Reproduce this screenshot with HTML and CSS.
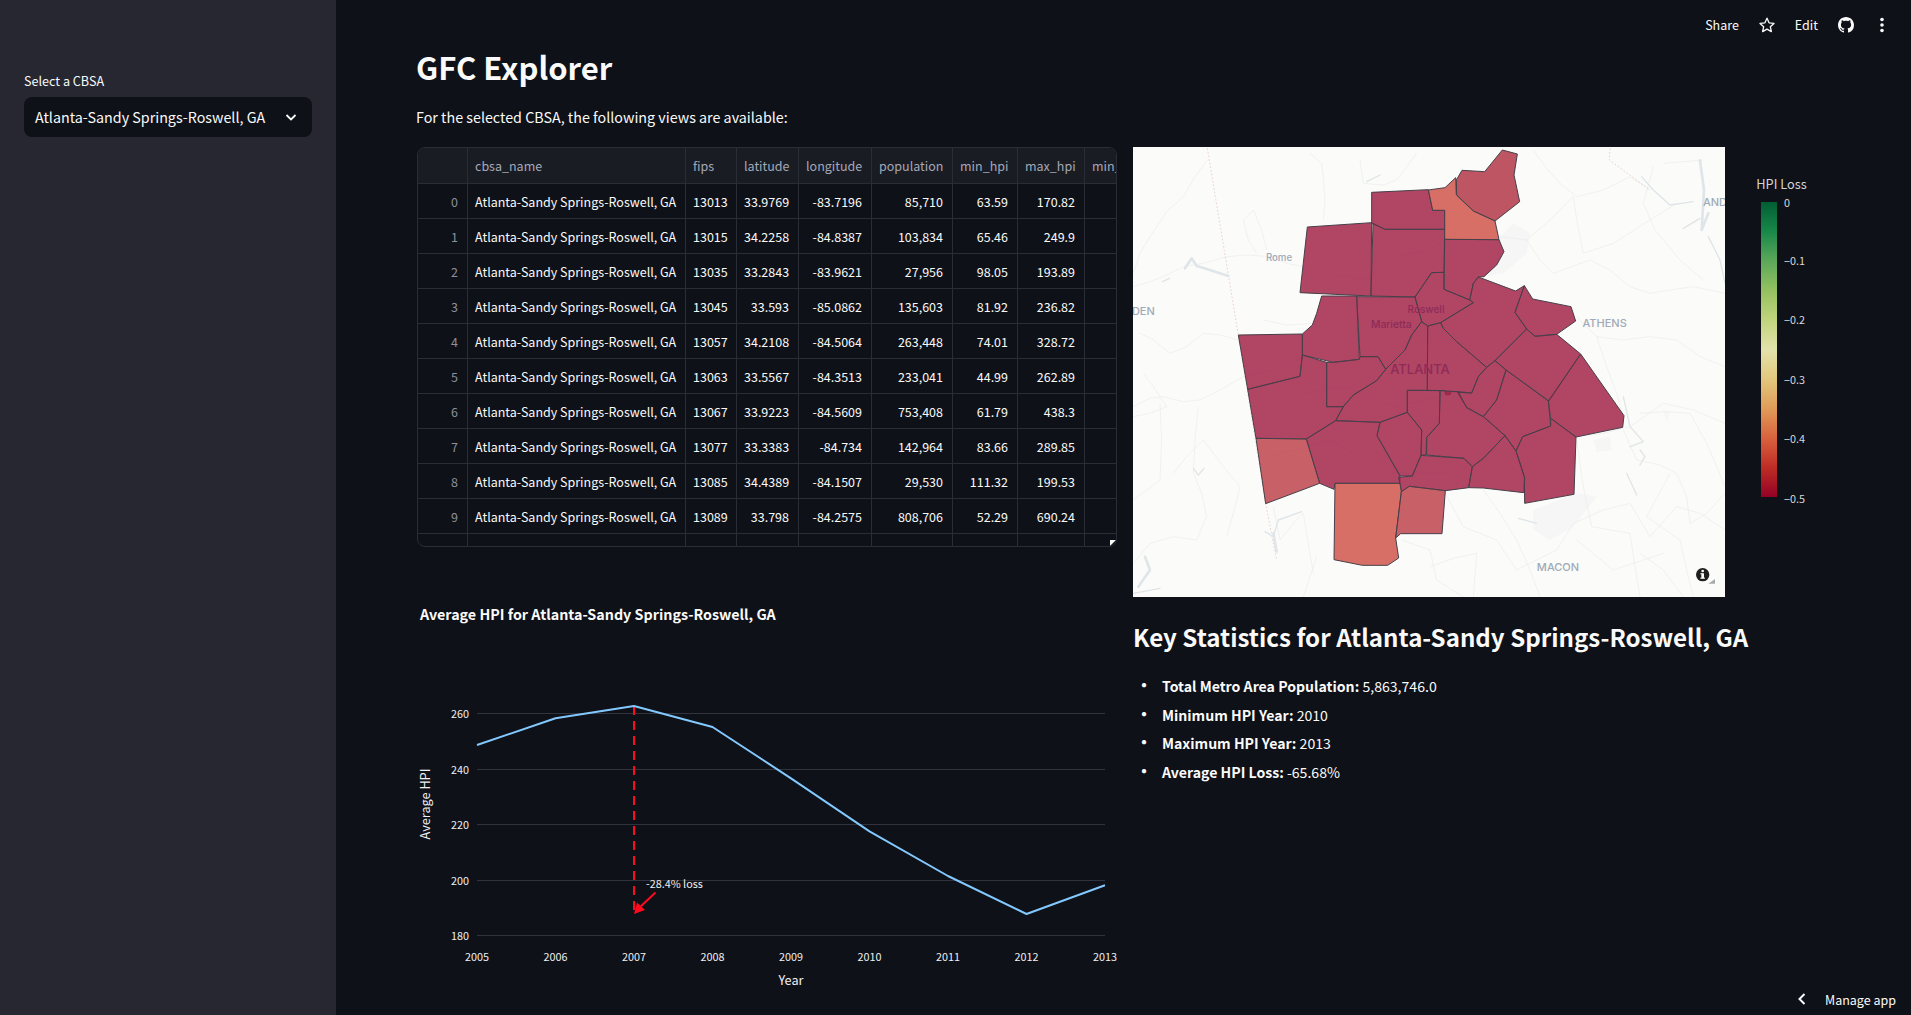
FILE: index.html
```html
<!DOCTYPE html>
<html lang="en">
<head>
<meta charset="utf-8">
<title>GFC Explorer</title>
<link rel="stylesheet" href="styles.css">
</head>
<body>
<div class="app">
  <aside class="sidebar">
    <label class="select-label">Select a CBSA</label>
    <div class="select">
      <span>Atlanta-Sandy Springs-Roswell, GA</span>
      <svg class="chevron" viewBox="0 0 16 16"><path d="M3.5 6l4.5 4.5L12.500 6"/></svg>
    </div>
  </aside>

  <main class="main">
    <h1 class="title">GFC Explorer</h1>
    <p class="intro">For the selected CBSA, the following views are available:</p>

    <div class="columns">
      <section class="col-left">
        <div class="grid-wrap">
          <table class="grid">
            <colgroup>
              <col class="c-idx"><col class="c-name"><col class="c-fips"><col class="c-lat"><col class="c-lon"><col class="c-pop"><col class="c-min"><col class="c-max"><col class="c-year">
            </colgroup>
            <thead>
              <tr><th></th><th>cbsa_name</th><th>fips</th><th>latitude</th><th>longitude</th><th>population</th><th>min_hpi</th><th>max_hpi</th><th>min_hpi_year</th></tr>
            </thead>
            <tbody>
              <tr><td class="idx">0</td><td>Atlanta-Sandy Springs-Roswell, GA</td><td>13013</td><td class="num">33.9769</td><td class="num">-83.7196</td><td class="num">85,710</td><td class="num">63.59</td><td class="num">170.82</td><td class="num">2012</td></tr>
              <tr><td class="idx">1</td><td>Atlanta-Sandy Springs-Roswell, GA</td><td>13015</td><td class="num">34.2258</td><td class="num">-84.8387</td><td class="num">103,834</td><td class="num">65.46</td><td class="num">249.9</td><td class="num">2011</td></tr>
              <tr><td class="idx">2</td><td>Atlanta-Sandy Springs-Roswell, GA</td><td>13035</td><td class="num">33.2843</td><td class="num">-83.9621</td><td class="num">27,956</td><td class="num">98.05</td><td class="num">193.89</td><td class="num">2012</td></tr>
              <tr><td class="idx">3</td><td>Atlanta-Sandy Springs-Roswell, GA</td><td>13045</td><td class="num">33.593</td><td class="num">-85.0862</td><td class="num">135,603</td><td class="num">81.92</td><td class="num">236.82</td><td class="num">2012</td></tr>
              <tr><td class="idx">4</td><td>Atlanta-Sandy Springs-Roswell, GA</td><td>13057</td><td class="num">34.2108</td><td class="num">-84.5064</td><td class="num">263,448</td><td class="num">74.01</td><td class="num">328.72</td><td class="num">2011</td></tr>
              <tr><td class="idx">5</td><td>Atlanta-Sandy Springs-Roswell, GA</td><td>13063</td><td class="num">33.5567</td><td class="num">-84.3513</td><td class="num">233,041</td><td class="num">44.99</td><td class="num">262.89</td><td class="num">2012</td></tr>
              <tr><td class="idx">6</td><td>Atlanta-Sandy Springs-Roswell, GA</td><td>13067</td><td class="num">33.9223</td><td class="num">-84.5609</td><td class="num">753,408</td><td class="num">61.79</td><td class="num">438.3</td><td class="num">2012</td></tr>
              <tr><td class="idx">7</td><td>Atlanta-Sandy Springs-Roswell, GA</td><td>13077</td><td class="num">33.3383</td><td class="num">-84.734</td><td class="num">142,964</td><td class="num">83.66</td><td class="num">289.85</td><td class="num">2012</td></tr>
              <tr><td class="idx">8</td><td>Atlanta-Sandy Springs-Roswell, GA</td><td>13085</td><td class="num">34.4389</td><td class="num">-84.1507</td><td class="num">29,530</td><td class="num">111.32</td><td class="num">199.53</td><td class="num">2011</td></tr>
              <tr><td class="idx">9</td><td>Atlanta-Sandy Springs-Roswell, GA</td><td>13089</td><td class="num">33.798</td><td class="num">-84.2575</td><td class="num">808,706</td><td class="num">52.29</td><td class="num">690.24</td><td class="num">2012</td></tr>
              <tr><td class="idx"></td><td></td><td></td><td></td><td></td><td></td><td></td><td></td><td></td></tr>
            </tbody>
          </table>
          <span class="grid-handle"></span>
        </div>

        <svg class="line-chart" viewBox="0 0 700 420">
          <text class="chart-title" x="3" y="23">Average HPI for Atlanta-Sandy Springs-Roswell, GA</text>
          <g class="gridlines">
            <line x1="60" x2="688" y1="123.500" y2="123.500"/>
            <line x1="60" x2="688" y1="179.500" y2="179.500"/>
            <line x1="60" x2="688" y1="234.500" y2="234.500"/>
            <line x1="60" x2="688" y1="290.500" y2="290.500"/>
            <line x1="60" x2="688" y1="345.500" y2="345.500"/>
          </g>
          <g class="ytick">
            <text x="52" y="123">260</text>
            <text x="52" y="179">240</text>
            <text x="52" y="234">220</text>
            <text x="52" y="290">200</text>
            <text x="52" y="345">180</text>
          </g>
          <g class="xtick">
            <text x="60" y="366">2005</text>
            <text x="138.500" y="366">2006</text>
            <text x="217" y="366">2007</text>
            <text x="295.500" y="366">2008</text>
            <text x="374" y="366">2009</text>
            <text x="452.500" y="366">2010</text>
            <text x="531" y="366">2011</text>
            <text x="609.500" y="366">2012</text>
            <text x="688" y="366">2013</text>
          </g>
          <text class="axis-title" x="374" y="389">Year</text>
          <text class="axis-title axis-y" transform="translate(7 214) rotate(-90)">Average HPI</text>
          <line class="drop" x1="217" y1="116" x2="217" y2="324"/>
          <polyline class="hpi" points="60,155 138.500,128.300 217,116 295.500,137 374,188.300 452.500,241.300 531,286 609.500,324 688,295.300"/>
          <line class="arrow-shaft" x1="238.500" y1="302.500" x2="222" y2="318"/>
          <polygon class="arrow-head" points="217,324 220,312.500 228,320"/>
          <text class="note" x="229" y="293">-28.4% loss</text>
        </svg>
      </section>

      <section class="col-right">
        <div class="map-row">
          <svg class="map" viewBox="9 21 1776 1350">
            <rect class="map-bg" x="9" y="21" width="1776" height="1350"/>
            <g class="patches">
              <polygon points="1110,290 1150,250 1200,280 1190,340 1120,400 1060,410 1100,360"/>
              <polygon points="1390,900 1440,890 1445,930 1400,935"/>
              <polygon points="1210,1110 1340,1060 1400,1070 1330,1160 1260,1200 1210,1170"/>
              <polygon points="1600,810 1620,815 1610,845"/>
            </g>
            <g class="roads">
              <polyline points="232,60 195,110 160,170 110,215 60,290 30,340 10,400"/>
              <polyline points="10,800 60,775 100,770 160,785 210,780 280,745 340,710 430,690 520,650"/>
              <polyline points="10,440 60,425 100,410 160,380 220,370 290,350 350,345 420,350 470,370 520,380"/>
              <polyline points="410,330 395,270 370,210 340,240 355,300 380,340"/>
              <polyline points="540,40 575,70 580,110 585,180 580,240"/>
              <polyline points="690,60 700,130 760,135 800,120 830,80 860,40"/>
              <polyline points="1210,30 1250,85 1290,130 1340,170 1420,150 1500,110 1560,150"/>
              <polyline points="1110,290 1190,300 1260,240 1330,170 1340,240 1360,340 1450,310 1560,240 1640,190"/>
              <polyline points="1190,300 1230,360 1270,400 1380,360 1440,390 1500,440 1560,460 1620,450 1690,440 1785,460"/>
              <polyline points="1340,530 1400,590 1480,600 1560,590 1640,600 1710,650 1785,680"/>
              <polyline points="1400,590 1430,680 1460,760 1480,830"/>
              <polyline points="1340,890 1420,880 1500,860 1600,790 1690,810 1785,850"/>
              <polyline points="1480,870 1520,960 1590,975 1640,1000 1670,1070 1680,1150 1730,1120 1785,1060"/>
              <polyline points="1530,820 1610,815 1680,820 1730,910 1760,980 1785,1040"/>
              <polyline points="30,580 70,600 120,640 170,620 220,580 270,585 325,600"/>
              <polyline points="400,540 470,555 560,550"/>
              <polyline points="10,1080 50,1050 90,1020 95,900 90,790"/>
              <polyline points="40,700 70,740 110,800 60,820 10,830"/>
              <polyline points="205,800 195,900 190,1000 215,1060 230,1130 200,1200 130,1190 60,1210 10,1270"/>
              <polyline points="430,1100 450,1200 490,1150 520,1120 535,1210 550,1300"/>
              <polyline points="815,1200 900,1230 920,1320 1000,1371"/>
              <polyline points="946,1060 1000,1160 1100,1200 1160,1290 1280,1230 1330,1150 1420,1110 1500,1090 1560,1190 1640,1100 1710,1120 1785,1170"/>
              <polyline points="1060,1050 1110,1120 1160,1200 1200,1290 1230,1371"/>
              <polyline points="900,1280 970,1255 1040,1240 1030,1371"/>
              <polyline points="1340,900 1360,1040 1385,1160 1500,1180 1515,1280 1530,1371"/>
              <polyline points="130,1000 170,950 220,900 280,980 330,1040 310,1120 290,1190"/>
              <polyline points="560,1250 540,1310 520,1371"/>
              <polyline points="1620,1000 1550,1130 1650,1200 1670,1290 1690,1371"/>
              <polyline points="1530,1240 1600,1290 1660,1371"/>
              <polyline points="600,400 700,420 800,350 900,330 1000,260"/>
              <polyline points="520,760 640,740 800,800 960,760 1100,860 1250,900"/>
              <polyline points="420,950 600,900 780,1000 950,1000"/>
              <polyline points="1570,80 1540,190 1575,270 1650,360 1720,420"/>
              <polyline points="1600,70 1720,60"/>
              <polyline points="1340,1200 1450,1290 1600,1240"/>
            </g>
            <polyline class="state" points="232,25 325,585 407,1091 440,1260"/>
            <polyline class="state" points="1440,25 1438,60 1560,150"/>
            <g class="lakes">
              <polyline class="thick" points="165,385 185,355 200,378 240,390 295,408"/>
              <polyline points="98,425 118,415"/>
              <polyline points="710,125 730,115 750,105"/>
              <polyline points="405,1175 430,1190 445,1140 515,1115"/>
              <polyline class="thick" points="440,1235 430,1180"/>
              <polyline class="thick" points="25,1340 60,1290 45,1250"/>
              <polyline points="10,1360 90,1345"/>
              <polyline points="190,985 205,1005 222,985"/>
              <polyline points="1480,770 1500,860 1540,905 1500,920"/>
              <polyline points="1490,1000 1520,1065"/>
              <polyline points="1535,110 1570,150 1620,195 1690,185"/>
              <polyline class="thick" points="1710,61 1722,150 1715,270 1735,220"/>
              <polyline points="1660,265 1710,235"/>
              <polyline points="1735,290 1770,360 1785,430"/>
              <polyline points="1530,930 1545,950 1530,975"/>
              <polyline points="1165,1135 1220,1150"/>
            </g>
            <g class="labels">
              <text class="l-city" x="447" y="351">Rome</text>
              <text class="l-big" x="40" y="514">DEN</text>
              <text class="l-big" x="1424" y="549">ATHENS</text>
              <text class="l-big" x="1284" y="1281">MACON</text>
              <text class="l-big" x="1755" y="187">AND</text>
            </g>
            <g class="counties">
              <polygon class="dark" points="532,261 725,248 723,468 510,458"/>
              <polygon class="dark" points="725,157 895,149 908,211 944,211 944,268 765,268 725,250"/>
              <polygon class="dark" points="729,250 765,268 944,268 942,397 905,398 855,471 723,468"/>
              <polygon class="dark" points="944,298 1107,299 1122,335 1100,375 1062,410 1045,411 1030,430 1019,480 942,448"/>
              <polygon class="dark" points="905,398 942,397 942,448 1019,480 1030,488 932,548 893,558 875,545 855,471"/>
              <polygon class="dark" points="680,470 855,471 875,545 845,585 825,630 767,688 744,650 690,650"/>
              <polygon class="dark" points="575,468 680,468 688,658 610,667 517,645 517,582 547,555 560,520"/>
              <polygon class="dark" points="325,585 517,582 517,645 510,709 353,748"/>
              <polygon class="dark" points="353,748 510,709 517,645 590,667 590,800 640,800 617,842 529,897 378,895"/>
              <polygon class="dark" points="590,667 610,667 688,658 690,650 744,650 767,688 740,722 670,765 640,800 590,800"/>
              <polygon class="dark" points="893,558 875,545 845,585 825,630 767,688 740,722 670,765 640,800 617,842 750,847 832,817 832,751 892,751"/>
              <polygon class="dark" points="893,558 932,548 940,565 980,605 1070,682 1045,710 1025,759 985,755 962,755 960,764 947,764 945,752 892,751"/>
              <polygon class="dark" points="932,548 1030,488 1019,480 1030,430 1045,411 1157,453 1183,437 1155,517 1190,567 1095,662 1070,682 980,605 940,565"/>
              <polygon class="dark" points="1183,437 1208,477 1323,500 1337,543 1280,583 1215,589 1190,567 1155,517"/>
              <polygon class="dark" points="1190,567 1215,589 1280,583 1352,642 1257,783 1128,690 1095,662"/>
              <polygon class="dark" points="1352,642 1482,827 1478,862 1338,891 1262,835 1255,783"/>
              <polygon class="dark" points="1095,662 1128,690 1100,780 1060,830 1010,803 982,757 1025,759 1045,710 1070,682"/>
              <polygon class="dark" points="1128,690 1255,783 1262,858 1178,890 1158,933 1125,887 1060,830 1100,780"/>
              <polygon class="dark" points="1262,835 1338,891 1332,1063 1184,1090 1183,1012 1158,933 1178,890 1262,858"/>
              <polygon class="dark" points="930,752 985,755 1010,803 1060,830 1125,887 1060,955 1027,980 1002,955 890,945 890,892 928,850"/>
              <polygon class="dark" points="832,751 930,752 928,850 890,892 888,945 873,946 875,870 832,817"/>
              <polygon class="dark" points="832,817 875,870 873,946 847,1008 810,1008 741,887 750,847"/>
              <polygon class="dark" points="617,842 750,847 741,887 810,1008 810,1030 615,1030 612,1048 569,1030 529,897"/>
              <polygon class="dark" points="873,946 1002,955 1027,980 1016,1043 946,1052 838,1039 814,1055 806,1012 847,1008"/>
              <polygon class="dark" points="1125,887 1158,933 1184,1012 1181,1058 1060,1044 1016,1043 1027,980 1060,955"/>
              <polygon class="mid" points="1117,30 1162,42 1152,105 1169,185 1095,243 1030,213 980,165 979,120 996,91 1064,95"/>
              <polygon class="light" points="895,150 945,143 977,113 979,165 1030,213 1095,243 1107,299 944,298 944,211 908,211"/>
              <polygon class="mid2" points="378,895 529,897 569,1030 407,1091"/>
              <polygon class="light" points="615,1030 810,1030 814,1055 797,1194 806,1254 773,1276 697,1276 612,1259"/>
              <polygon class="mid2" points="838,1039 946,1052 936,1181 812,1181 797,1194 814,1055"/>
            </g>
            <g class="labels-over">
              <text class="l-ros" x="888" y="506">Roswell</text>
              <text class="l-mar" x="784" y="552">Marietta</text>
              <text class="l-atl" x="870" y="686">ATLANTA</text>
            </g>
            <g class="info">
              <polygon class="info-mark" points="1735,1331 1755,1317 1755,1331"/>
              <circle class="info-halo" cx="1718" cy="1304" r="26"/>
              <circle class="info-dot" cx="1718" cy="1304" r="20"/>
              <circle class="info-i" cx="1718" cy="1293" r="4"/>
              <rect class="info-i" x="1714" y="1300" width="8" height="15"/>
              <rect class="info-i" x="1711" y="1300" width="7" height="3"/>
              <rect class="info-i" x="1711" y="1313" width="14" height="3"/>
            </g>
          </svg>

          <svg class="legend" viewBox="0 0 108 450">
            <defs>
              <linearGradient id="rdylgn" x1="0" y1="0" x2="0" y2="1">
                <stop offset="0" stop-color="#006837"/>
                <stop offset="0.1" stop-color="#1a9850"/>
                <stop offset="0.2" stop-color="#66bd63"/>
                <stop offset="0.3" stop-color="#a6d96a"/>
                <stop offset="0.4" stop-color="#d9ef8b"/>
                <stop offset="0.5" stop-color="#ffffbf"/>
                <stop offset="0.6" stop-color="#fee08b"/>
                <stop offset="0.7" stop-color="#fdae61"/>
                <stop offset="0.8" stop-color="#f46d43"/>
                <stop offset="0.9" stop-color="#d73027"/>
                <stop offset="1" stop-color="#a50026"/>
              </linearGradient>
            </defs>
            <text class="legend-title" x="56.500" y="36.500">HPI Loss</text>
            <rect class="legend-bar" x="36" y="55" width="16" height="295"/>
            <g class="legend-tick">
              <text x="59" y="54.500">0</text>
              <text x="59" y="113">−0.1</text>
              <text x="59" y="172">−0.2</text>
              <text x="59" y="232">−0.3</text>
              <text x="59" y="291">−0.4</text>
              <text x="59" y="350.500">−0.5</text>
            </g>
          </svg>
        </div>

        <h2 class="stats-title">Key Statistics for Atlanta-Sandy Springs-Roswell, GA</h2>
        <ul class="stats">
          <li><strong>Total Metro Area Population:</strong> 5,863,746.0</li>
          <li><strong>Minimum HPI Year:</strong> 2010</li>
          <li><strong>Maximum HPI Year:</strong> 2013</li>
          <li><strong>Average HPI Loss:</strong> -65.68%</li>
        </ul>
      </section>
    </div>
  </main>

  <header class="toolbar">
    <span>Share</span>
    <svg class="tool-icon star" viewBox="0 0 24 24"><path d="M12 1.800l3.100 6.900 7.400.9-5.500 5 1.500 7.300-6.500-3.700-6.500 3.700 1.500-7.300-5.500-5 7.400-.9z"/></svg>
    <span>Edit</span>
    <svg class="tool-icon gh" viewBox="0 0 16 16"><path d="M8 0C3.580 0 0 3.580 0 8c0 3.540 2.290 6.530 5.470 7.590.4.070.55-.17.55-.38 0-.19-.01-.82-.01-1.490-2.010.37-2.530-.49-2.690-.94-.09-.23-.48-.94-.82-1.130-.28-.15-.68-.52-.01-.53.63-.01 1.080.58 1.230.82.72 1.210 1.870.87 2.330.66.07-.52.28-.87.51-1.070-1.780-.2-3.640-.89-3.640-3.950 0-.87.31-1.590.82-2.150-.08-.2-.36-1.020.08-2.120 0 0 .67-.21 2.200.82.64-.18 1.320-.27 2-.27.68 0 1.360.09 2 .27 1.530-1.040 2.200-.82 2.200-.82.44 1.100.16 1.920.08 2.120.51.56.82 1.270.82 2.150 0 3.070-1.870 3.750-3.650 3.950.29.25.54.73.54 1.480 0 1.070-.01 1.930-.01 2.200 0 .21.15.46.55.38A8.013 8.013 0 0016 8c0-4.420-3.580-8-8-8z"/></svg>
    <svg class="tool-icon dots" viewBox="0 0 16 16"><circle cx="8" cy="2.500" r="1.800"/><circle cx="8" cy="8" r="1.800"/><circle cx="8" cy="13.500" r="1.800"/></svg>
  </header>

  <div class="manage">
    <svg class="manage-chevron" viewBox="0 0 16 16"><path d="M10.500 3L5.500 8l5 5"/></svg>
    <span>Manage app</span>
  </div>
</div>
</body>
</html>
```

FILE: styles.css
```css
* { box-sizing: border-box; }
html, body { margin: 0; height: 100%; overflow: hidden; background: #0e1117; }
body {
  font-family: "Noto Sans CJK SC", "Noto Sans", "Liberation Sans", sans-serif;
  color: #fafafa;
  font-size: 14.300px;
}
.app { position: relative; display: flex; height: 1015px; width: 1911px; }

/* sidebar */
.sidebar { width: 336px; flex: none; background: #262730; padding: 69px 24px 0; }
.select-label { display: block; font-size: 12.600px; line-height: 24px; height: 28px; }
.select {
  display: flex; align-items: center; justify-content: space-between;
  height: 40px; padding: 0 13px 0 11px; background: #0e1117; border-radius: 8px;
  font-size: 14.300px; line-height: 24px; white-space: nowrap;
}
.chevron { width: 16px; height: 16px; fill: none; stroke: #fafafa; stroke-width: 1.800; }

/* main */
.main { flex: 1; padding: 43px 0 0 81px; }
.title { margin: 0 0 0 -1px; font-size: 31px; font-weight: 700; line-height: 48px; }
.intro { margin: 14px 0 18px -1px; font-size: 14.300px; line-height: 24px; }
.columns { display: flex; gap: 16px; }
.col-left { width: 700px; flex: none; }
.col-right { flex: 1; }

/* data grid */
.grid-wrap {
  position: relative; width: 700px; height: 400px; overflow: hidden;
  border: 1px solid #2b2d36; border-radius: 8px;
}
.grid { border-collapse: separate; border-spacing: 0; table-layout: fixed; width: 736px; font-size: 12.500px; }
.c-idx { width: 50px; } .c-name { width: 218px; } .c-fips { width: 51px; } .c-lat { width: 62px; }
.c-lon { width: 73px; } .c-pop { width: 81px; } .c-min { width: 65px; } .c-max { width: 67px; } .c-year { width: 69px; }
.grid th, .grid td {
  padding: 0 9px 0 7px; white-space: nowrap; overflow: hidden;
  border-right: 1px solid #2b2d36; border-bottom: 1px solid #2b2d36;
}
.grid th { height: 36px; background: #1a1c24; color: #a3a8b8; font-weight: 400; text-align: left; }
.grid td { height: 35px; }
.grid .num { text-align: right; }
.grid .idx { text-align: right; color: #8d8f9a; }
.grid-handle {
  position: absolute; right: 0; bottom: 0; width: 6px; height: 6px;
  background: #fafafa; clip-path: polygon(0 0, 100% 0, 0 100%);
}

/* line chart */
.line-chart { display: block; width: 700px; height: 420px; margin-top: 43px; }
.line-chart text { fill: #f0f0f2; font-size: 10.800px; dominant-baseline: central; }
.line-chart .chart-title { font-size: 14.300px; font-weight: 700; fill: #fafafa; }
.gridlines line { stroke: #31333f; stroke-width: 1; }
.ytick text { text-anchor: end; }
.xtick text { text-anchor: middle; }
.line-chart .axis-title { font-size: 12.700px; text-anchor: middle; }
.hpi { fill: none; stroke: #83c9ff; stroke-width: 2; stroke-linejoin: round; }
.drop { stroke: #ff0a1e; stroke-width: 2; stroke-dasharray: 9 6; }
.arrow-shaft { stroke: #ff0a1e; stroke-width: 2; }
.arrow-head { fill: #ff0a1e; }

/* map */
.map-row { display: flex; height: 450px; }
.map { width: 592px; height: 450px; flex: none; display: block; }
.legend { width: 108px; height: 450px; flex: none; display: block; }
.map-bg { fill: #fbfbf9; }
.patches polygon { fill: #f5f6f5; }
.roads polyline { fill: none; stroke: #eaecec; stroke-width: 2; stroke-linejoin: round; }
.state { fill: none; stroke: #e6c9cc; stroke-width: 2.500; stroke-dasharray: 5 6; }
.lakes polyline { fill: none; stroke: #dfe5e8; stroke-width: 4; stroke-linejoin: round; stroke-linecap: round; }
.lakes .thick { stroke-width: 8; }
.labels text, .labels-over text { text-anchor: middle; dominant-baseline: central; font-family: "Inter", sans-serif; font-weight: 500; }
.labels text { fill: #a0aab8; }
.l-city { font-size: 29px; }
.l-big { font-size: 33px; }
.labels-over text { fill: #8e2c58; }
.labels-over .l-ros { font-size: 30px; }
.labels-over .l-mar { font-size: 31px; }
.labels-over .l-atl { font-size: 39px; }
.counties polygon { stroke: #46404a; stroke-width: 3; stroke-linejoin: round; }
.counties .dark { fill: #a2244a; fill-opacity: .85; }
.counties .mid { fill: #b23748; fill-opacity: .85; }
.counties .mid2 { fill: #bd444d; fill-opacity: .85; }
.counties .light { fill: #d0564c; fill-opacity: .85; }
.info-mark { fill: #a8aaaa; }
.info-halo { fill: #fbfbf9; }
.info-dot { fill: #1f1f1f; }
.info-i { fill: #fff; }

/* legend */
.legend text { dominant-baseline: central; }
.legend-title { fill: #d2d3d6; font-size: 12.800px; text-anchor: middle; }
.legend-bar { fill: url(#rdylgn); opacity: .88; }
.legend-tick text { fill: #d8d9dc; font-size: 10.800px; }

/* stats */
.stats-title { margin: 20px 0 0; font-size: 24.100px; font-weight: 700; line-height: 40px; }
.stats { margin: 17px 0 0; padding: 0; list-style: none; font-size: 14.100px; line-height: 24px; }
.stats li { margin-bottom: 4.700px; }
.stats li::before { content: "•"; display: inline-block; width: 28px; padding-left: 1px; font-size: 20px; line-height: 0; vertical-align: -1px; }
.stats strong { font-weight: 700; }

/* overlays */
.toolbar {
  position: absolute; top: 13px; right: 21px; display: flex; align-items: center; gap: 20px;
  height: 24px; font-size: 12.500px; line-height: 24px;
}
.tool-icon { width: 16px; height: 16px; display: block; }
.star { fill: none; stroke: #fafafa; stroke-width: 2; stroke-linejoin: round; }
.gh, .dots { fill: #fafafa; }
.manage {
  position: absolute; right: 15px; bottom: 0; height: 32px; display: flex; align-items: center; gap: 15px;
  font-size: 12.500px;
}
.manage-chevron { width: 16px; height: 16px; fill: none; stroke: #fafafa; stroke-width: 2; }
```
